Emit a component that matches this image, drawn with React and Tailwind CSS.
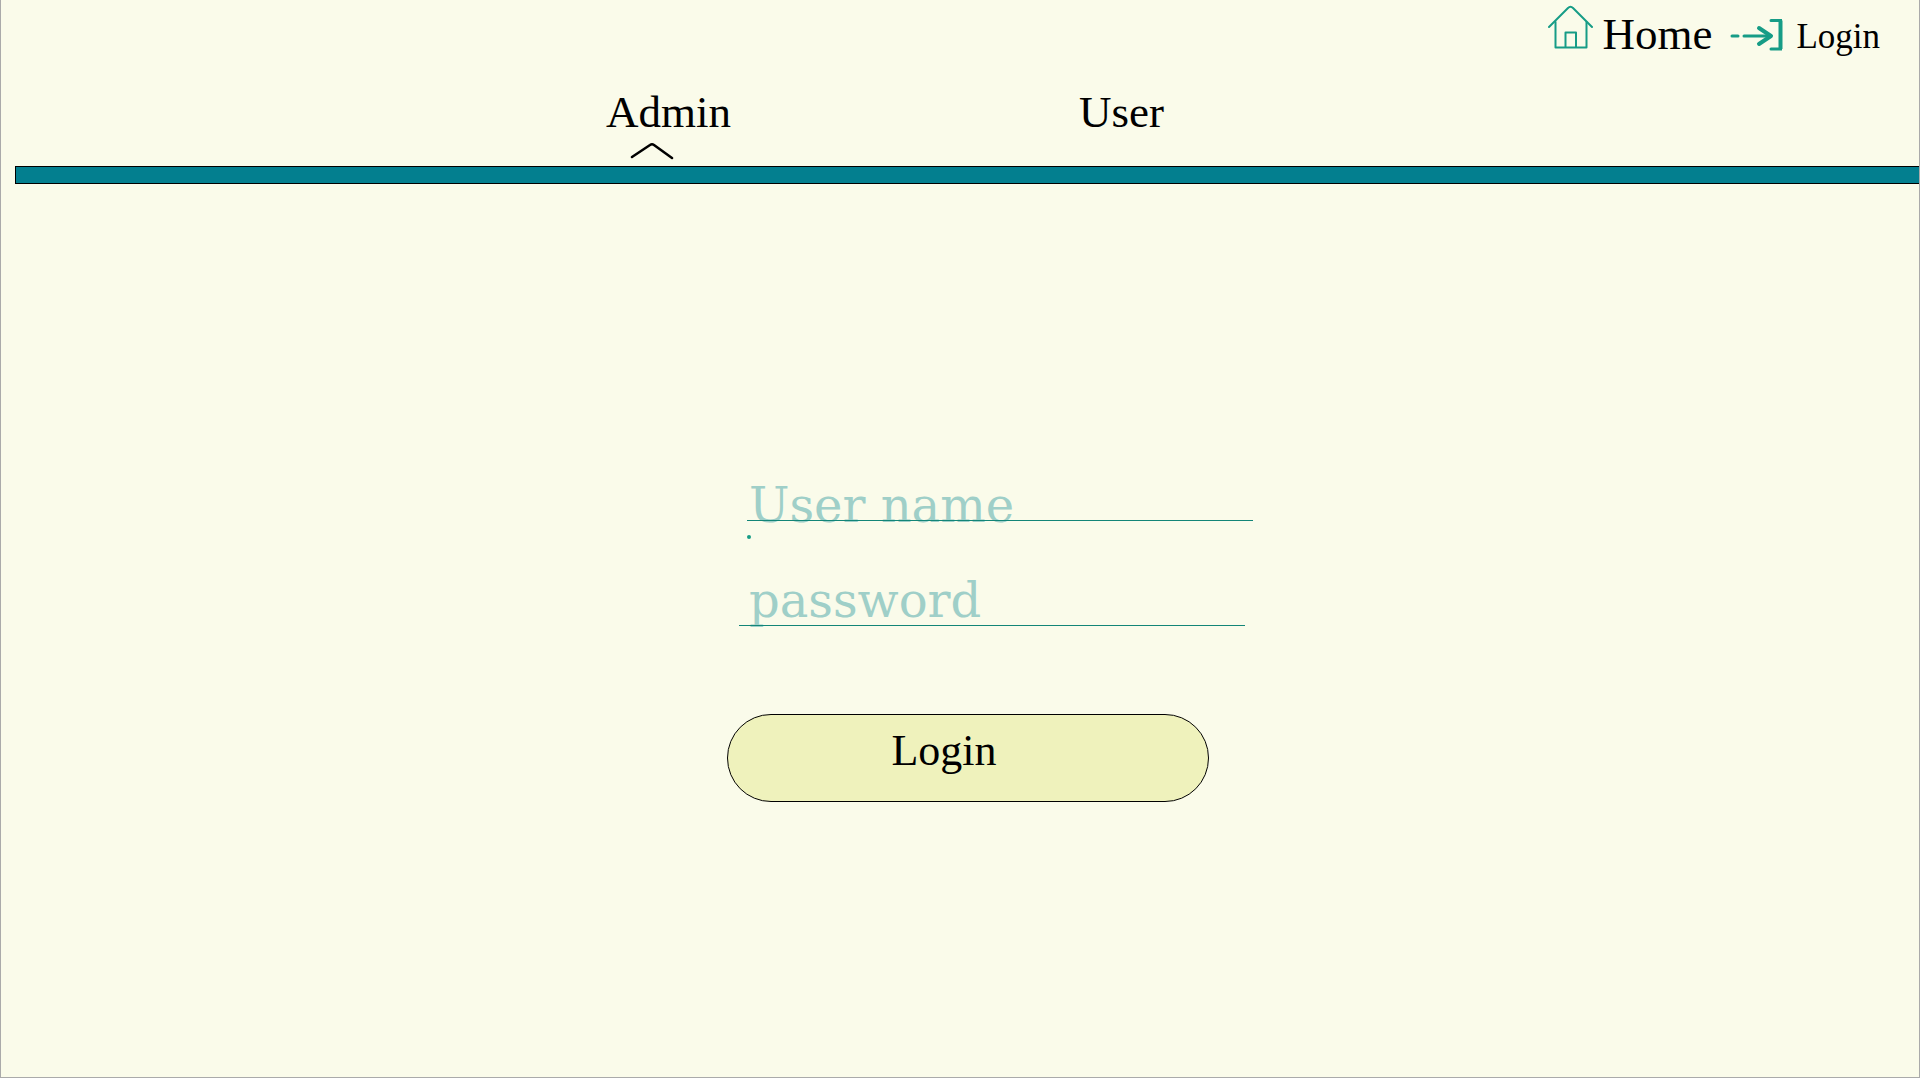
import React, { useState } from "react";

function HomeIcon() {
  return (
    <svg width="46" height="44" viewBox="0 0 46 44" fill="none" stroke="#169c86" strokeWidth="2" strokeLinecap="round" strokeLinejoin="round" aria-hidden="true">
      <path d="M1 22 L20 3 Q22.500 .5 25 3 L44 22" />
      <path d="M7.500 17 V42.500 H38.500 V17" />
      <path d="M17.500 42 V27.500 H28 V42" />
    </svg>
  );
}

function EnterIcon() {
  return (
    <svg width="54" height="34" viewBox="0 0 54 34" fill="none" stroke="#169c86" strokeLinecap="round" aria-hidden="true">
      <path d="M2 18 H8" strokeWidth="3" />
      <path d="M14 18 H41" strokeWidth="3" />
      <path d="M29 10 L41 18 L29 26" strokeWidth="4" strokeLinejoin="round" />
      <path d="M41 2.500 H50.500 V31 H41" strokeWidth="3" />
      <path d="M50.500 2.500 V31" strokeWidth="4" strokeLinecap="butt" />
    </svg>
  );
}

function Field({ label, type, className, inputClass, lineClass }) {
  return (
    <div className={"relative w-[506px] max-w-full " + className}>
      <input
        type={type}
        aria-label={label}
        placeholder={label}
        className={"block h-[60px] w-full bg-transparent font-['DejaVu_Serif',serif] text-[48px] leading-[60px] text-[#128577] outline-none placeholder:text-[#9fcfc8] placeholder:opacity-100 " + inputClass}
      />
      <span className={"absolute inset-x-0 h-px bg-[#128577] " + lineClass} />
    </div>
  );
}

export default function App() {
  const [tab, setTab] = useState("Admin");
  return (
    <div className="flex min-h-screen flex-col border-x border-b border-[#aaaaaa] bg-[#fafbea] font-['Liberation_Serif',serif] text-black">
      <header>
        <nav className="flex h-[70px] items-start justify-end gap-[18px] pr-[39px]">
          <a href="#home" className="flex items-start gap-2 text-[45px] leading-[52px]">
            <span className="pt-[5px]"><HomeIcon /></span>
            <span className="pt-2">Home</span>
          </a>
          <a href="#login" className="flex items-start gap-3 text-[35px] leading-10">
            <span className="pt-[18px]"><EnterIcon /></span>
            <span className="pt-[17px]">Login</span>
          </a>
        </nav>
        <div className="flex h-24 items-start justify-center gap-[348px] pr-[150px] pt-4">
          {["Admin", "User"].map((name) => (
            <button key={name} type="button" onClick={() => setTab(name)} className="flex flex-col items-start text-[45px] leading-[52px]">
              {name}
              {tab === name && (
                <svg className="mt-1 ml-6" width="44" height="18" viewBox="0 0 44 18" fill="none" stroke="black" strokeWidth="2.500" strokeLinecap="round" strokeLinejoin="round" aria-hidden="true">
                  <path d="M2 15 L20 3 Q22 1.500 24 3 L42 16" />
                </svg>
              )}
            </button>
          ))}
        </div>
        <div className="ml-3.5 h-[18px] border border-r-0 border-black bg-[#037f8f]" />
      </header>
      <main className="flex flex-1 flex-col items-center pt-[291px] pl-[60px]">
        <form className="flex w-[526px] max-w-full flex-col" onSubmit={(e) => e.preventDefault()}>
          <Field label="User name" type="text" className="ml-5" inputClass="pl-0.5" lineClass="bottom-3.5" />
          <span className="ml-5 h-1 w-1 rounded-full bg-[#169c86]" />
          <Field label="password" type="password" className="mt-[31px] ml-3" inputClass="pl-2.5" lineClass="bottom-1" />
          <button type="submit" className="mt-[84px] flex h-[88px] w-[482px] max-w-full items-start justify-center rounded-full border border-black bg-[#eff2bc] pt-2.5 pr-12 text-[44px] leading-[52px]">
            Login
          </button>
        </form>
      </main>
    </div>
  );
}
